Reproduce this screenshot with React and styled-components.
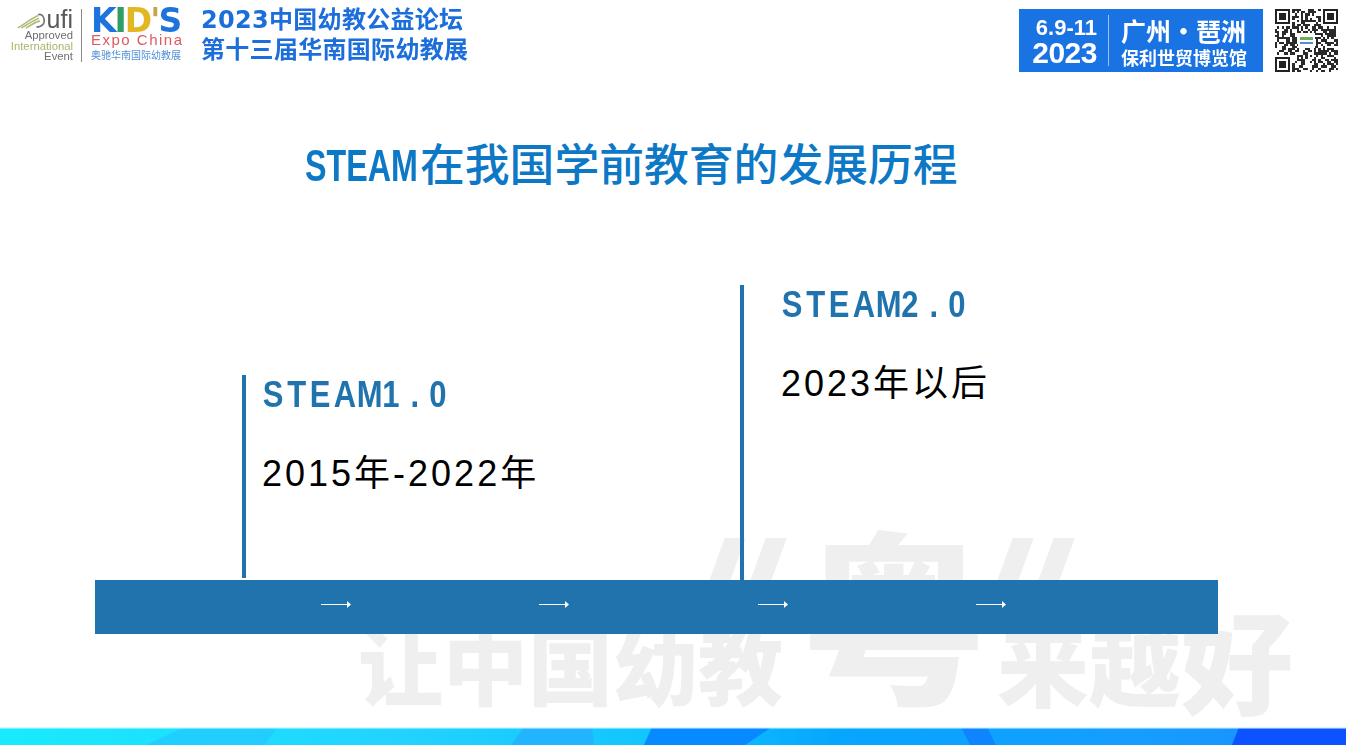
import React from 'react';
import styled, { createGlobalStyle } from 'styled-components';

const CJK = '"Liberation Sans", "Noto Sans CJK SC", sans-serif';

const GlobalStyle = createGlobalStyle`
  html, body {
    margin: 0;
    padding: 0;
    background: #fff;
  }
`;

const Page = styled.div`
  position: relative;
  width: 1346px;
  height: 745px;
  overflow: hidden;
  display: flex;
  flex-direction: column;
  background: #fff;
  font-family: ${CJK};
`;

const Header = styled.header`
  position: relative;
  display: flex;
  justify-content: space-between;
  height: 63px;
  padding: 9px 8px 0 10px;
`;

const BrandGroup = styled.div`
  display: flex;
  align-items: flex-start;
  filter: blur(0.55px);
`;

const UfiBlock = styled.div`
  width: 63px;
  display: flex;
  flex-direction: column;
  align-items: flex-end;
  color: #6e6e6e;
  font-size: 11.3px;
  line-height: 10.5px;
`;

const UfiMark = styled.div`
  display: flex;
  align-items: center;
  height: 21px;
  font-size: 25px;
  line-height: 21px;
  color: #5a5a5a;
`;

const OliveLine = styled.span`
  color: #a9b56d;
`;

const Divider = styled.div`
  width: 1px;
  height: 53px;
  margin: 0 9px 0 8px;
  background: #8a8a8a;
`;

const KidsBlock = styled.div`
  width: 93px;
  margin-right: 17px;
`;

const KidsMark = styled.div`
  font-family: "DejaVu Sans", sans-serif;
  font-weight: 700;
  font-size: 33px;
  line-height: 24px;
  letter-spacing: -2px;
  white-space: nowrap;
  color: #1c74dc;
`;

const KidsLetter = styled.span`
  color: ${(p) => p.$color};
`;

const ExpoLine = styled.div`
  font-size: 15px;
  line-height: 13px;
  letter-spacing: 1.5px;
  color: #dd5a60;
  white-space: nowrap;
`;

const ExpoCn = styled.div`
  margin-top: 3px;
  font-size: 10px;
  line-height: 14px;
  color: #4f8fd8;
  white-space: nowrap;
`;

const ForumTitle = styled.div`
  font-family: "DejaVu Sans", "Noto Sans CJK SC", sans-serif;
  font-weight: 700;
  font-size: 24px;
  line-height: 30px;
  letter-spacing: 0.3px;
  color: #1c6fdb;
  white-space: nowrap;
  margin-top: -4px;
`;

const DateGroup = styled.div`
  display: flex;
  align-items: flex-start;
  gap: 12px;
  filter: blur(0.55px);
`;

const DateCard = styled.div`
  display: flex;
  align-items: center;
  width: 244px;
  height: 63px;
  background: #1a73e3;
  color: #fff;
  font-weight: 700;
`;

const DateNums = styled.div`
  width: 88px;
  padding: 3px 10px 0 0;
  box-sizing: border-box;
  text-align: right;
`;

const DateDay = styled.div`
  font-size: 22px;
  line-height: 22px;
`;

const DateYear = styled.div`
  font-size: 30px;
  line-height: 28px;
  letter-spacing: -0.5px;
`;

const CardRule = styled.div`
  width: 1px;
  height: 51px;
  margin: 0 12px 0 1px;
  background: #9cc5f5;
`;

const VenueCity = styled.div`
  font-size: 25px;
  line-height: 32px;
  white-space: nowrap;
  font-family: "Noto Sans CJK SC", sans-serif;
`;

const VenueHall = styled.div`
  font-size: 18px;
  line-height: 22px;
  white-space: nowrap;
  font-family: "Noto Sans CJK SC", sans-serif;
`;

const Title = styled.h1`
  position: relative;
  margin: 60px 0 0 305px;
  font-family: "Noto Sans CJK SC", sans-serif;
  font-weight: 500;
  font-size: 44.8px;
  line-height: 60px;
  color: #0d78c6;
  white-space: nowrap;
`;

// no narrow font on the box, so the latin part is squeezed to the slide's width
const TitleLatin = styled.span`
  display: inline-block;
  width: 115px;
  font-family: "Liberation Sans", sans-serif;
  font-weight: 700;
  transform: scaleX(0.72);
  transform-origin: left center;
`;

const Timeline = styled.section`
  position: relative;
  width: 1123px;
  margin: 90px 0 0 95px;
`;

const Milestones = styled.div`
  display: flex;
  align-items: flex-end;
  padding-left: 147px;
  height: 295px;
`;

const Milestone = styled.div`
  width: ${(p) => p.$width}px;
  height: ${(p) => p.$height}px;
  margin-bottom: ${(p) => p.$gap}px;
  padding-left: ${(p) => p.$inset}px;
  box-sizing: border-box;
  border-left: 4px solid #2073ad;
`;

const MilestoneName = styled.div`
  display: flex;
  height: 40px;
  margin-left: -1px;
  color: #2073ad;
  font-weight: 700;
  font-size: 36px;
  line-height: 40px;
`;

const NameChar = styled.span`
  width: 23.6px;
  text-align: center;
  transform: scaleX(0.86);
`;

const MilestoneDate = styled.div`
  margin-top: 38px;
  font-size: 36px;
  line-height: 42px;
  letter-spacing: 3px;
  color: #000;
  white-space: nowrap;
`;

const Bar = styled.div`
  display: flex;
  align-items: center;
  box-sizing: border-box;
  height: 54px;
  padding: 0 0 6px 226px;
  background: #2073ad;
`;

const ArrowSlot = styled.div`
  width: 218.3px;
  height: 9px;
  color: #fff;

  svg {
    display: block;
  }
`;

const Watermark = styled.div`
  position: absolute;
  left: 358px;
  bottom: 40px;
  display: flex;
  align-items: flex-end;
  color: #efefef;
  font-family: "Noto Sans CJK SC", sans-serif;
  font-weight: 900;
  white-space: nowrap;
`;

const WatermarkText = styled.span`
  font-size: ${(p) => p.$size}px;
  line-height: ${(p) => p.$line}px;
  margin-right: ${(p) => p.$after || 0}px;
`;

const QuoteMark = styled.div`
  position: absolute;
  top: 538px;
  left: ${(p) => p.$left}px;
  display: flex;
  gap: 20px;
  transform: skewX(-20deg);
`;

const QuoteStroke = styled.span`
  width: 21px;
  height: 70px;
  background: #efefef;
`;

const Band = styled.svg`
  display: block;
  position: absolute;
  left: 0;
  bottom: 0;
  width: 1346px;
  height: 18px;
`;

// seeded so the qr noise stays the same on every render
function qrCells() {
  const cells = [];
  let seed = 20230609;
  const size = 29;
  const inFinder = (x, y) =>
    (x < 8 && y < 8) || (x > size - 9 && y < 8) || (x < 8 && y > size - 9);
  for (let y = 0; y < size; y++) {
    for (let x = 0; x < size; x++) {
      seed = (seed * 1103515245 + 12345) & 0x7fffffff;
      if (!inFinder(x, y) && (seed >> 8) % 100 < 52) cells.push([x, y]);
    }
  }
  return cells;
}

function Finder({ x, y }) {
  return (
    <g>
      <rect x={x} y={y} width="7" height="7" fill="#222" />
      <rect x={x + 1} y={y + 1} width="5" height="5" fill="#fff" />
      <rect x={x + 2} y={y + 2} width="3" height="3" fill="#222" />
    </g>
  );
}

function QrCode() {
  return (
    <svg width="63" height="63" viewBox="0 0 29 29" shapeRendering="crispEdges">
      {qrCells().map(([x, y]) => (
        <rect key={`${x}-${y}`} x={x} y={y} width="1" height="1" fill="#2a2a2a" />
      ))}
      <Finder x={0} y={0} />
      <Finder x={22} y={0} />
      <Finder x={0} y={22} />
      <rect x="10.5" y="11" width="8" height="7" fill="#fff" />
      <rect x="11.5" y="13" width="6" height="1.2" fill="#6fae5a" />
      <rect x="11.5" y="15" width="6" height="1" fill="#4f8fd8" />
    </svg>
  );
}

function UfiSwoosh() {
  return (
    <svg width="30" height="20" viewBox="0 0 34 20" fill="none">
      <path d="M1 19C9 14 17 8 24 5" stroke="#b4bd78" strokeWidth="1.8" />
      <path d="M5 19C12 15 19 10 25 8" stroke="#b4bd78" strokeWidth="1.8" />
      <path d="M10 19C16 16 21 12 26 11" stroke="#b4bd78" strokeWidth="1.8" />
      <path d="M22 18C28 18 33 14 30 7C29 4 26 3 24 4" stroke="#6e6e6e" strokeWidth="1.8" />
    </svg>
  );
}

function Arrow() {
  return (
    <svg width="30" height="9" viewBox="0 0 30 9">
      <rect y="4" width="27" height="1" fill="currentColor" />
      <path d="M26 1L30 4.5L26 8Z" fill="currentColor" />
    </svg>
  );
}

function BottomBand() {
  return (
    <Band viewBox="0 0 1346 18" preserveAspectRatio="none">
      <defs>
        <linearGradient id="bandFill" x1="0" x2="1" y1="0" y2="0">
          <stop offset="0" stopColor="#18ebff" />
          <stop offset="0.3" stopColor="#22d3ff" />
          <stop offset="0.5" stopColor="#10c4ff" />
          <stop offset="0.62" stopColor="#06a6ff" />
          <stop offset="0.85" stopColor="#169dff" />
          <stop offset="1" stopColor="#1a8cff" />
        </linearGradient>
      </defs>
      <rect width="1346" height="18" fill="url(#bandFill)" />
      <polygon points="185,0 277,0 265,18 146,18" fill="#22c8ff" opacity="0.7" />
      <polygon points="524,0 592,0 594,18 511,18" fill="#22b4ff" />
      <polygon points="652,0 772,0 745,18 644,18" fill="#0789ff" />
      <polygon points="961,0 987,0 996,18 970,18" fill="#0f84ff" />
      <polygon points="1239,0 1346,0 1346,18 1232,18" fill="#0c52ff" />
      <rect width="1346" height="1.5" fill="#d6f6ff" />
    </Band>
  );
}

function MilestoneLabel({ text }) {
  return (
    <MilestoneName>
      {text.split('').map((ch, i) => (
        <NameChar key={i}>{ch}</NameChar>
      ))}
    </MilestoneName>
  );
}

export default function App() {
  return (
    <Page>
      <GlobalStyle />
      <Watermark>
        <WatermarkText $size={85} $line={86} $after={18}>让中国幼教</WatermarkText>
        <WatermarkText $size={186} $line={188} $after={10}>粤</WatermarkText>
        <WatermarkText $size={92} $line={90}>来越</WatermarkText>
        <WatermarkText $size={112} $line={96}>好</WatermarkText>
      </Watermark>
      <QuoteMark $left={712}>
        <QuoteStroke />
        <QuoteStroke />
      </QuoteMark>
      <QuoteMark $left={1000}>
        <QuoteStroke />
        <QuoteStroke />
      </QuoteMark>
      <BottomBand />

      <Header>
        <BrandGroup>
          <UfiBlock>
            <UfiMark>
              <UfiSwoosh />
              ufi
            </UfiMark>
            <span>Approved</span>
            <OliveLine>International</OliveLine>
            <span>Event</span>
          </UfiBlock>
          <Divider />
          <KidsBlock>
            <KidsMark>
              <KidsLetter $color="#1c74dc">K</KidsLetter>
              <KidsLetter $color="#2f9d64">I</KidsLetter>
              <KidsLetter $color="#e2b722">D</KidsLetter>
              <KidsLetter $color="#c9a34a">'</KidsLetter>
              S
            </KidsMark>
            <ExpoLine>Expo China</ExpoLine>
            <ExpoCn>奥驰华南国际幼教展</ExpoCn>
          </KidsBlock>
          <ForumTitle>
            <div>2023中国幼教公益论坛</div>
            <div>第十三届华南国际幼教展</div>
          </ForumTitle>
        </BrandGroup>
        <DateGroup>
          <DateCard>
            <DateNums>
              <DateDay>6.9-11</DateDay>
              <DateYear>2023</DateYear>
            </DateNums>
            <CardRule />
            <div>
              <VenueCity>广州·琶洲</VenueCity>
              <VenueHall>保利世贸博览馆</VenueHall>
            </div>
          </DateCard>
          <QrCode />
        </DateGroup>
      </Header>

      <Title>
        <TitleLatin>STEAM</TitleLatin>在我国学前教育的发展历程
      </Title>

      <Timeline>
        <Milestones>
          <Milestone $width={498} $height={203} $gap={2} $inset={16}>
            <MilestoneLabel text="STEAM1.0" />
            <MilestoneDate>2015年-2022年</MilestoneDate>
          </Milestone>
          <Milestone $width={400} $height={295} $gap={0} $inset={37}>
            <MilestoneLabel text="STEAM2.0" />
            <MilestoneDate>2023年以后</MilestoneDate>
          </Milestone>
        </Milestones>
        <Bar>
          {[0, 1, 2, 3].map((i) => (
            <ArrowSlot key={i}>
              <Arrow />
            </ArrowSlot>
          ))}
        </Bar>
      </Timeline>
    </Page>
  );
}
